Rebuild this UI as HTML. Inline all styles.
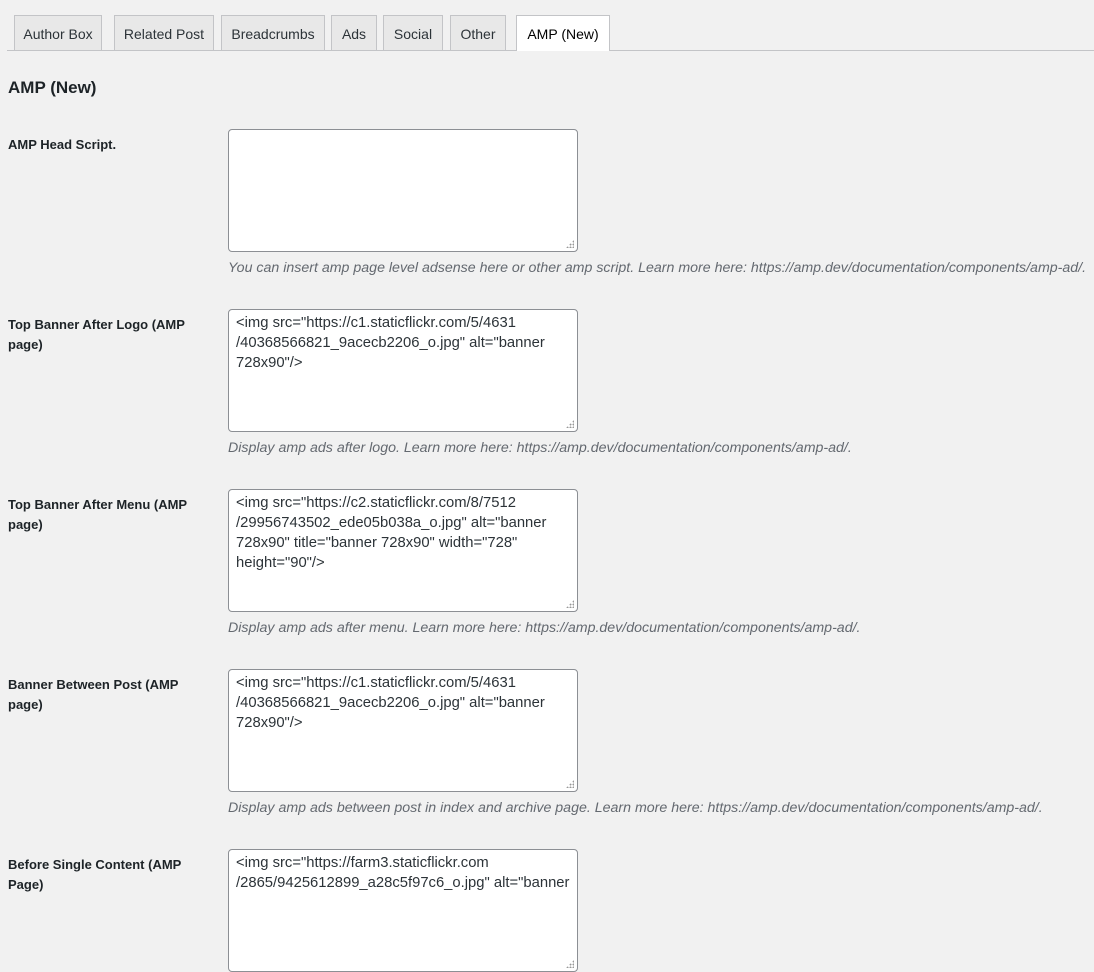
<!DOCTYPE html>
<html><head><meta charset="utf-8"><style>
body{margin:0;background:#f1f1f1;font-family:"Liberation Sans",sans-serif;color:#1d2327;width:1094px;height:888px;overflow:hidden;position:relative}
.line{position:absolute;left:7px;right:0;top:50px;border-top:1px solid #c3c4c7}
.tab{position:absolute;top:15px;height:35px;box-sizing:border-box;border:1px solid #c3c4c7;border-bottom:none;background:#e8e8e8;font-size:14px;line-height:36px;text-align:center;color:#2c3338}
.tab.a{background:#fff;height:36px;color:#000}
h2{position:absolute;left:8px;top:78px;margin:0;font-size:17px;font-weight:600;color:#1d2327}
.lb{position:absolute;left:8px;font-size:13px;font-weight:bold;line-height:20px;color:#1d2327;width:190px}
.ta{position:absolute;left:228px;width:350px;height:123px;box-sizing:border-box;border:1px solid #8c8f94;border-radius:4px;background:#fff;padding:3px 7px;font-size:14.8px;line-height:20px;color:#2c3338;white-space:pre;overflow:hidden}
.ta:after{content:"";position:absolute;right:3px;bottom:3px;width:8px;height:8px;background:radial-gradient(circle,#999 0.9px,transparent 1.1px) 0 0/3px 3px;clip-path:polygon(100% 0,100% 100%,0 100%)}
.d{position:absolute;left:228px;font-size:14.2px;font-style:italic;color:#646970;white-space:nowrap}
</style></head><body>
<div class="line"></div>
<div class="tab" style="left:14px;width:88px">Author Box</div>
<div class="tab" style="left:114px;width:100px">Related Post</div>
<div class="tab" style="left:221px;width:104px">Breadcrumbs</div>
<div class="tab" style="left:331px;width:46px">Ads</div>
<div class="tab" style="left:383px;width:60px">Social</div>
<div class="tab" style="left:450px;width:56px">Other</div>
<div class="tab a" style="left:516px;width:94px">AMP (New)</div>
<h2>AMP (New)</h2>

<div class="lb" style="top:135px">AMP Head Script.</div>
<div class="ta" style="top:129px"></div>
<div class="d" style="top:260px">You can insert amp page level adsense here or other amp script. Learn more here: https://amp.dev/documentation/components/amp-ad/.</div>

<div class="lb" style="top:315px">Top Banner After Logo (AMP<br>page)</div>
<div class="ta" style="top:309px">&lt;img src="https://c1.staticflickr.com/5/4631
/40368566821_9acecb2206_o.jpg" alt="banner
728x90"/&gt;</div>
<div class="d" style="top:440px">Display amp ads after logo. Learn more here: https://amp.dev/documentation/components/amp-ad/.</div>

<div class="lb" style="top:495px">Top Banner After Menu (AMP<br>page)</div>
<div class="ta" style="top:489px">&lt;img src="https://c2.staticflickr.com/8/7512
/29956743502_ede05b038a_o.jpg" alt="banner
728x90" title="banner 728x90" width="728"
height="90"/&gt;</div>
<div class="d" style="top:620px">Display amp ads after menu. Learn more here: https://amp.dev/documentation/components/amp-ad/.</div>

<div class="lb" style="top:675px">Banner Between Post (AMP<br>page)</div>
<div class="ta" style="top:669px">&lt;img src="https://c1.staticflickr.com/5/4631
/40368566821_9acecb2206_o.jpg" alt="banner
728x90"/&gt;</div>
<div class="d" style="top:800px">Display amp ads between post in index and archive page. Learn more here: https://amp.dev/documentation/components/amp-ad/.</div>

<div class="lb" style="top:855px">Before Single Content (AMP<br>Page)</div>
<div class="ta" style="top:849px">&lt;img src="https://farm3.staticflickr.com
/2865/9425612899_a28c5f97c6_o.jpg" alt="banner</div>
</body></html>
